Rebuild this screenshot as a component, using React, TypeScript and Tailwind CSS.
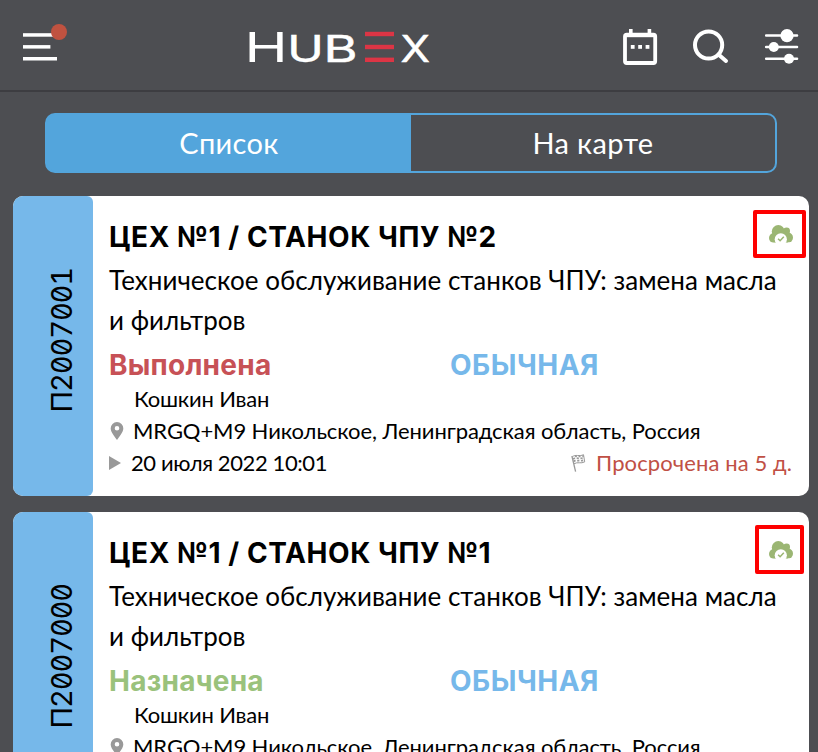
type Job = {
  code: string;
  title: string;
  status: string;
  statusClass: string;
  markClass: string;
};

const jobs: Job[] = [
  {
    code: "П2007001",
    title: "ЦЕХ №1 / СТАНОК ЧПУ №2",
    status: "Выполнена",
    statusClass: "text-[#c75156]",
    markClass: "left-[740px] top-[14px] h-[48px] w-[53px]",
  },
  {
    code: "П2007000",
    title: "ЦЕХ №1 / СТАНОК ЧПУ №1",
    status: "Назначена",
    statusClass: "text-[#9ac27c]",
    markClass: "left-[742px] top-[13px] h-[49px] w-[49px]",
  },
];

function MenuIcon() {
  return (
    <svg className="h-[40px] w-[46px]" viewBox="22 23 46 40">
      <g fill="#fff">
        <rect x="23" y="33.2" width="30" height="3.5" />
        <rect x="23" y="45.1" width="27.4" height="3.5" />
        <rect x="23" y="57" width="34" height="3.5" />
      </g>
      <circle cx="59" cy="32" r="8" fill="#c05240" />
    </svg>
  );
}

function Logo() {
  return (
    <svg
      className="h-[60px] w-[190px] overflow-visible font-['Inter',sans-serif]"
      viewBox="244 17 190 60"
      fill="#fff"
    >
      <text x="244.4" y="62" fontSize="41" textLength="43.2" lengthAdjust="spacingAndGlyphs">H</text>
      <g stroke="#fff" strokeWidth="0.5">
        <text x="287.3" y="62" fontSize="36.5" textLength="36.5" lengthAdjust="spacingAndGlyphs">U</text>
        <text x="323.6" y="62" fontSize="36.5" textLength="34" lengthAdjust="spacingAndGlyphs">B</text>
        <text x="400.4" y="62" fontSize="36.5" textLength="29.5" lengthAdjust="spacingAndGlyphs">X</text>
      </g>
      <g fill="#dc3545">
        <rect x="365" y="31.8" width="29" height="4.4" />
        <rect x="365" y="44.8" width="29" height="4.4" />
        <rect x="365" y="57.6" width="29" height="4.4" />
      </g>
    </svg>
  );
}

function CalendarIcon() {
  return (
    <svg className="h-[38px] w-[36px]" viewBox="622 28 36 38" fill="#fff">
      <rect x="625" y="34.7" width="30.2" height="28.3" rx="1.8" fill="none" stroke="#fff" strokeWidth="3.8" />
      <rect x="625" y="33" width="30" height="4.2" />
      <rect x="629" y="29" width="3.6" height="5" />
      <rect x="647.6" y="29" width="3.6" height="5" />
      <rect x="630.8" y="45" width="3.8" height="3.8" />
      <rect x="638.2" y="45" width="3.8" height="3.8" />
      <rect x="645.6" y="45" width="3.8" height="3.8" />
    </svg>
  );
}

function SearchIcon() {
  return (
    <svg className="h-[38px] w-[38px]" viewBox="691 28 38 38" fill="none" stroke="#fff">
      <circle cx="708.6" cy="45" r="13.6" strokeWidth="4" />
      <path d="M718.5 54.5 726 61" strokeWidth="4" strokeLinecap="round" />
    </svg>
  );
}

function SlidersIcon() {
  return (
    <svg className="h-[38px] w-[36px]" viewBox="764 28 36 38" fill="#fff">
      <path d="M766.2 35.5H797M766.2 47H797M766.2 58.8H797" stroke="#fff" strokeWidth="2.6" strokeLinecap="round" />
      <circle cx="787" cy="35.7" r="6.6" />
      <circle cx="773.8" cy="47" r="5" />
      <circle cx="789" cy="58.8" r="5" />
    </svg>
  );
}

function CloudIcon() {
  return (
    <svg className="h-[20px] w-[26px]" viewBox="0 0 26 20">
      <g fill="#9bb673">
        <circle cx="10.3" cy="7.5" r="6.5" />
        <circle cx="18.6" cy="7" r="3.4" />
        <circle cx="6" cy="14" r="5" />
        <circle cx="20" cy="13.6" r="5" />
        <rect x="6" y="7.5" width="14" height="11.4" />
      </g>
      <circle cx="12.8" cy="15.3" r="6.1" fill="#fff" />
      <rect x="0" y="18.6" width="26" height="2" fill="#fff" />
      <path d="m10.1 14.7 2 2 3.7-4" fill="none" stroke="#9bb673" strokeWidth="1.5" />
    </svg>
  );
}

function PinIcon() {
  return (
    <svg className="h-[18px] w-[14px]" viewBox="0 0 14 18">
      <path
        fill="#999"
        fillRule="evenodd"
        d="M7 0a6.3 6.3 0 0 0-6.3 6.4C.7 10 4.2 13.5 7 18c2.800-4.500 6.300-8 6.300-11.600A6.300 6.300 0 0 0 7 0Zm0 4a2.300 2.300 0 1 1 0 4.600A2.300 2.300 0 0 1 7 4Z"
      />
    </svg>
  );
}

function FlagIcon() {
  return (
    <svg className="h-[18px] w-[15px]" viewBox="0 0 15 18" fill="none" stroke="#999">
      <path d="M.9 2 4.6 17.6" strokeWidth="1.3" />
      <path d="M1.3 2.8C4.5 0 8.5 2.8 12.5.7l1.2 7.2C10 10 6.5 7.5 3 9.8" strokeWidth="1" />
      <path d="M2 5c3.5-2 7 .5 11-1.500M2.500 7.400c3.500-2 7 .5 11-1.500" strokeWidth="1.7" strokeDasharray="2.2 1.6" />
      <path d="M4 2.500c3-1.200 5.500.8 8.500-.6" strokeWidth="1.8" strokeDasharray="1.9 1.8" />
    </svg>
  );
}

function JobCard({ job }: { job: Job }) {
  return (
    <article className="relative flex h-[300px] shrink-0 overflow-hidden rounded-[10px] bg-white text-black">
      <div className="flex w-20 shrink-0 items-center justify-center rounded-r-[6px] bg-[#76b8ea] pb-[11px] pl-[17px]">
        <span className="rotate-180 font-['Inter',sans-serif] text-[29px] leading-none tracking-[-1.1px] whitespace-nowrap [font-feature-settings:'zero','tnum'] [writing-mode:vertical-rl]">
          {job.code}
        </span>
      </div>
      <div className="flex min-w-0 flex-1 flex-col pt-[21px] pr-[17px] pl-4 whitespace-nowrap">
        <h2 className="font-['Inter',sans-serif] text-[28px] leading-[40px] font-bold tracking-[0.57px]">{job.title}</h2>
        <p className="mt-[3px] text-[26px] leading-[40px] tracking-[0.03px]">
          Техническое обслуживание станков ЧПУ: замена масла
          <br />и фильтров
        </p>
        <div className="mt-[7px] flex font-['Inter',sans-serif] text-[28px] leading-9 font-bold">
          <span className={`w-[341px] tracking-[0.25px] ${job.statusClass}`}>{job.status}</span>
          <span className="tracking-[0.5px] text-[#76b8ea]">ОБЫЧНАЯ</span>
        </div>
        <div className="pl-[25px] text-[22px] leading-8 tracking-[-0.2px]">Кошкин Иван</div>
        <div className="flex items-center gap-[9px] pl-px text-[22px] leading-8 tracking-[-0.09px]">
          <PinIcon />
          <span>MRGQ+M9 Никольское, Ленинградская область, Россия</span>
        </div>
        <div className="flex items-center text-[22px] leading-8">
          <svg className="h-[14px] w-[12px]" viewBox="0 0 12 14">
            <path d="M0 0 12 7 0 14Z" fill="#999" />
          </svg>
          <span className="ml-2.5 tracking-[-0.4px]">20 июля 2022 10:01</span>
          <span className="ml-auto flex items-center gap-2.5 text-[#c05045]">
            <FlagIcon />
            <span className="tracking-[0.1px]">Просрочена на 5 д.</span>
          </span>
        </div>
      </div>
      <div className="absolute top-[28px] left-[755px]">
        <CloudIcon />
      </div>
      <div className={`absolute rounded-[2px] border-4 border-[#fe0000] ${job.markClass}`} />
    </article>
  );
}

export default function App() {
  return (
    <div className="flex h-[752px] w-[818px] flex-col overflow-hidden bg-[#4d4e52] font-['Lato','Open_Sans',sans-serif]">
      <header className="flex h-[92px] shrink-0 border-b-2 border-[#3d3d41] text-white">
        <div className="flex w-[244px] pt-[23px] pl-[22px]">
          <MenuIcon />
        </div>
        <div className="pt-[17px]">
          <Logo />
        </div>
        <div className="flex flex-1 justify-end pt-7 pr-[18px]">
          <CalendarIcon />
          <div className="mr-[35px] ml-[33px]">
            <SearchIcon />
          </div>
          <SlidersIcon />
        </div>
      </header>
      <nav className="mt-[21px] mr-[41px] ml-[45px] flex h-[60px] shrink-0 overflow-hidden rounded-[10px] border-2 border-[#53a5dc] bg-[linear-gradient(to_right,#53a5dc_364px,transparent_364px)] bg-origin-padding text-[29px] tracking-[0.35px] text-white">
        <button className="w-[364px]">Список</button>
        <button className="flex-1">На карте</button>
      </nav>
      <main className="mt-[23px] mr-[9px] ml-[13px] flex flex-col gap-4">
        {jobs.map((job) => (
          <JobCard key={job.code} job={job} />
        ))}
      </main>
    </div>
  );
}
